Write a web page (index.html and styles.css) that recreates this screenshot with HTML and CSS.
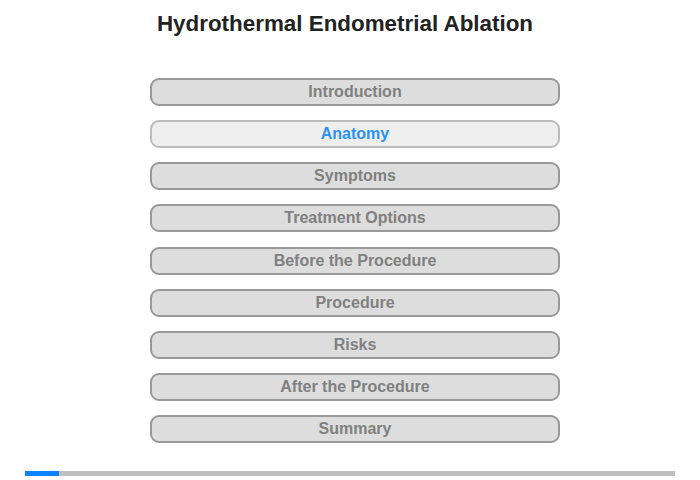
FILE: index.html
```html
<!DOCTYPE html>
<html>
<head>
<meta charset="utf-8">
<link rel="stylesheet" href="styles.css">
</head>
<body>
<div class="page">
  <h1 class="title">Hydrothermal Endometrial Ablation</h1>
  <nav class="menu">
    <div class="item">Introduction</div>
    <div class="item active">Anatomy</div>
    <div class="item">Symptoms</div>
    <div class="item">Treatment Options</div>
    <div class="item">Before the Procedure</div>
    <div class="item">Procedure</div>
    <div class="item">Risks</div>
    <div class="item">After the Procedure</div>
    <div class="item">Summary</div>
  </nav>
  <div class="progress"><div class="progress-fill" style="width:34px"></div></div>
</div>
</body>
</html>
```
FILE: styles.css
```css
html, body {
  margin: 0;
  padding: 0;
  background: #ffffff;
}
.page {
  width: 700px;
  height: 480px;
  font-family: "Liberation Sans", Arial, sans-serif;
  display: flex;
  flex-direction: column;
}
.title {
  margin: 0;
  padding: 11px 10px 0 0;
  font-size: 22.4px;
  line-height: 26px;
  font-weight: bold;
  color: #222222;
  text-align: center;
}
.menu {
  margin: 41px 0 0 150px;
  width: 410px;
  display: flex;
  flex-direction: column;
  gap: 14.125px;
}
.item {
  box-sizing: border-box;
  height: 28px;
  border: 2px solid #999999;
  border-radius: 9px;
  background: #dddddd;
  color: #808080;
  font-size: 16px;
  line-height: 24px;
  font-weight: bold;
  text-align: center;
}
.item.active {
  background: #eeeeee;
  border-color: #bbbbbb;
  color: #2a92f0;
}
.progress {
  margin: 28px 0 0 25px;
  width: 650px;
  height: 5px;
  background: #c0c0c0;
}
.progress-fill {
  height: 5px;
  background: #0a84ff;
}
```
